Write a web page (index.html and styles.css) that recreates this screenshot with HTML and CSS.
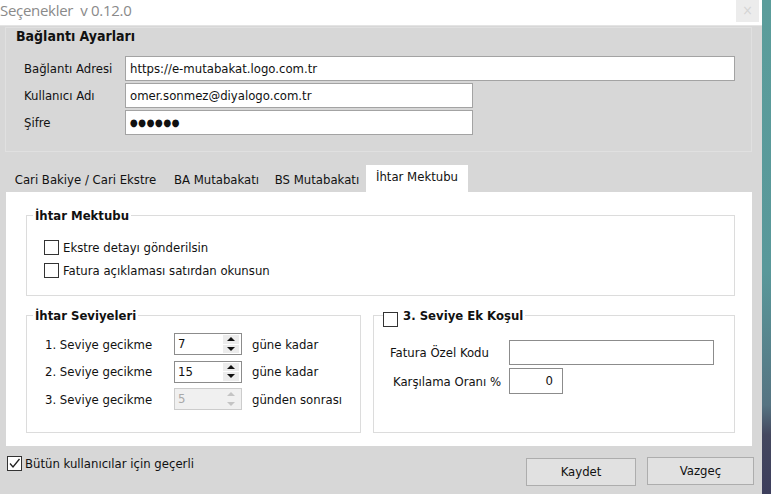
FILE: index.html
```html
<!DOCTYPE html>
<html lang="tr">
<head>
<meta charset="utf-8">
<title>Seçenekler</title>
<link rel="stylesheet" href="styles.css">
</head>
<body>
<div class="screen">
  <div class="window">
    <div class="titlebar">
      <span class="title">Seçenekler&nbsp; v 0.12.0</span>
      <span class="close">×</span>
    </div>
    <div class="body">
      <section class="conn">
        <h2 class="conn-title">Bağlantı Ayarları</h2>
        <div class="conn-rows">
          <div class="conn-row"><span class="conn-label">Bağlantı Adresi</span><div class="field field-wide">https://e-mutabakat.logo.com.tr</div></div>
          <div class="conn-row"><span class="conn-label">Kullanıcı Adı</span><div class="field field-mid">omer.sonmez@diyalogo.com.tr</div></div>
          <div class="conn-row"><span class="conn-label">Şifre</span><div class="field field-mid field-pass">●●●●●●</div></div>
        </div>
      </section>

      <div class="tabs">
        <div class="tab tab-cari">Cari Bakiye / Cari Ekstre</div>
        <div class="tab tab-ba">BA Mutabakatı</div>
        <div class="tab tab-bs">BS Mutabakatı</div>
        <div class="tab tab-ihtar tab-active">İhtar Mektubu</div>
      </div>

      <div class="panel">
        <div class="group group-letter">
          <div class="group-head"><span class="group-title">İhtar Mektubu</span></div>
          <div class="letter-rows">
            <div class="check-row"><span class="cb"></span><span>Ekstre detayı gönderilsin</span></div>
            <div class="check-row"><span class="cb"></span><span>Fatura açıklaması satırdan okunsun</span></div>
          </div>
        </div>

        <div class="group-pair">
          <div class="group group-levels">
            <div class="group-head"><span class="group-title">İhtar Seviyeleri</span></div>
            <div class="level-rows">
              <div class="level-row">
                <span class="level-label">1. Seviye gecikme</span>
                <div class="spin"><span class="spin-value">7</span><span class="spin-btns"><span class="spin-up"></span><span class="spin-down"></span></span></div>
                <span class="level-unit">güne kadar</span>
              </div>
              <div class="level-row">
                <span class="level-label">2. Seviye gecikme</span>
                <div class="spin"><span class="spin-value">15</span><span class="spin-btns"><span class="spin-up"></span><span class="spin-down"></span></span></div>
                <span class="level-unit">güne kadar</span>
              </div>
              <div class="level-row">
                <span class="level-label">3. Seviye gecikme</span>
                <div class="spin spin-disabled"><span class="spin-value">5</span><span class="spin-btns"><span class="spin-up"></span><span class="spin-down"></span></span></div>
                <span class="level-unit">günden sonrası</span>
              </div>
            </div>
          </div>

          <div class="group group-extra">
            <div class="group-head group-head-check"><span class="group-title title-check"><span class="cb"></span><span>3. Seviye Ek Koşul</span></span></div>
            <div class="extra-rows">
              <div class="extra-row"><span class="extra-label">Fatura Özel Kodu</span><div class="field field-code"></div></div>
              <div class="extra-row"><span class="extra-label extra-label-2">Karşılama Oranı %</span><div class="field field-rate">0</div></div>
            </div>
          </div>
        </div>
      </div>

      <div class="footer">
        <div class="check-row check-all">
          <span class="cb cb-checked"><svg width="13" height="13" viewBox="0 0 13 13"><path d="M2 6.5 L5 10 L11.5 2" fill="none" stroke="#222" stroke-width="1.3"/></svg></span>
          <span>Bütün kullanıcılar için geçerli</span>
        </div>
        <div class="buttons">
          <div class="btn btn-save">Kaydet</div>
          <div class="btn btn-cancel">Vazgeç</div>
        </div>
      </div>
    </div>
  </div>
  <div class="edge"></div>
</div>
</body>
</html>
```

FILE: styles.css
```css
* { box-sizing: border-box; }
html, body { margin: 0; padding: 0; }
body {
  width: 771px;
  height: 494px;
  overflow: hidden;
  font-family: "DejaVu Sans Condensed", "DejaVu Sans", sans-serif;
  font-stretch: condensed;
  font-size: 13px;
  color: #111;
  background: #d7d7d7;
}
.screen { display: flex; width: 771px; height: 494px; }
.window { width: 762px; display: flex; flex-direction: column; }
.edge {
  width: 9px;
  background: linear-gradient(to bottom, #5b9d9b 0%, #59989a 55%, #567482 82%, #44485f 88%, #3d3e5c 100%);
}

.titlebar {
  height: 26px;
  background: #fff;
  display: flex;
  justify-content: space-between;
  align-items: flex-start;
  border-bottom: 1px solid #e4e4e4;
}
.title {
  font-family: "Open Sans", sans-serif;
  font-stretch: normal;
  font-size: 15px;
  color: #8a8a8a;
  line-height: 21px;
  letter-spacing: -0.3px;
}
.close {
  width: 23px;
  height: 22px;
  margin-right: 3px;
  background: #ececec;
  color: #d4d4d4;
  text-align: center;
  line-height: 21px;
  font-size: 14px;
}

.body { flex: 1; display: flex; flex-direction: column; background: #d7d7d7; }

.conn {
  margin: 1px 10px 0 5px;
  height: 125px;
  border: 1px solid #e0e0e0;
  padding: 1px 0 0 10px;
}
.conn-title { margin: 0 0 12px; font-size: 14px; font-weight: bold; line-height: 15px; }
.conn-rows { display: flex; flex-direction: column; gap: 2px; margin-left: 8px; }
.conn-row { display: flex; align-items: center; height: 25px; }
.conn-label { width: 101px; }
.field {
  height: 25px;
  border: 1px solid #a3a3a3;
  background: #fff;
  padding: 0 4px;
  line-height: 23px;
  white-space: nowrap;
}
.field-wide { width: 610px; }
.field-mid { width: 348px; }
.field-pass { font-size: 10px; letter-spacing: 0.5px; }

.tabs { display: flex; align-items: flex-end; height: 27px; margin: 13px 0 0 6px; }
.tab { height: 25px; line-height: 25px; text-align: center; white-space: nowrap; }
.tab-cari { width: 159px; }
.tab-ba { width: 103px; }
.tab-bs { width: 98px; }
.tab-ihtar { width: 102px; }
.tab-active { height: 27px; line-height: 24px; background: #fff; }

.panel {
  margin: 0 10px 0 6px;
  height: 254px;
  background: #fff;
  padding: 23px 17px 0 20px;
}
.group { border: 1px solid #dcdcdc; }
.group-head { display: flex; height: 15px; margin: -8px 0 0 6px; }
.group-title {
  background: #fff;
  padding: 0 2px;
  font-weight: bold;
  font-size: 13px;
  line-height: 15px;
  white-space: nowrap;
}
.letter-rows { display: flex; flex-direction: column; gap: 1px; padding: 13px 0 14px 17px; }
.check-row { display: flex; align-items: center; gap: 4px; height: 22px; }
.cb {
  width: 15px;
  height: 15px;
  border: 1px solid #333;
  background: #fff;
  flex: none;
  display: flex;
  align-items: center;
  justify-content: center;
}

.group-pair { display: flex; gap: 12px; margin-top: 19px; }
.group-levels { width: 335px; }
.group-extra { width: 362px; }

.level-rows { display: flex; flex-direction: column; gap: 5.5px; padding: 10px 0 22px 18px; }
.level-row { display: flex; align-items: center; height: 22px; }
.level-label { width: 129px; }
.level-unit { margin-left: 10px; }
.spin {
  width: 68px;
  height: 22px;
  border: 1px solid #8c8c8c;
  background: #fff;
  display: flex;
}
.spin-value { flex: 1; padding-left: 3px; line-height: 20px; }
.spin-btns { width: 19px; display: flex; flex-direction: column; padding: 1px 2px 1px 1px; gap: 1px; }
.spin-up, .spin-down {
  flex: 1;
  background: #ececec;
  display: flex;
  align-items: center;
  justify-content: center;
}
.spin-up::after {
  content: "";
  border-left: 4px solid transparent;
  border-right: 4px solid transparent;
  border-bottom: 4px solid #111;
}
.spin-down::after {
  content: "";
  border-left: 4px solid transparent;
  border-right: 4px solid transparent;
  border-top: 4px solid #111;
}
.spin-disabled { border-color: #cccccc; background: #f0f0f0; color: #a9a9a9; }
.spin-disabled .spin-up, .spin-disabled .spin-down { background: #f0f0f0; }
.spin-disabled .spin-up::after { border-bottom-color: #c4c4c4; }
.spin-disabled .spin-down::after { border-top-color: #c4c4c4; }

.group-head-check { margin-left: 9px; }
.title-check { display: flex; align-items: flex-start; gap: 5px; padding: 0 2px 0 0; }
.title-check .cb { margin: 4px 0 -4px; }
.extra-rows { display: flex; flex-direction: column; gap: 3px; padding: 17px 0 0 16px; }
.extra-row { display: flex; align-items: center; }
.extra-label { width: 119px; }
.extra-label-2 { width: 116px; margin-left: 3px; }
.field-code { width: 205px; height: 25px; border-color: #8c8c8c; }
.field-rate { width: 54px; height: 26px; text-align: right; padding-right: 9px; border-color: #8c8c8c; }

.footer { flex: 1; display: flex; justify-content: space-between; padding: 9px 8px 0 7px; }
.check-all { height: 16px; gap: 3px; }
.buttons { display: flex; gap: 11px; margin-top: 3px; align-items: flex-start; }
.btn {
  height: 28px;
  border: 1px solid #adadad;
  background: #e1e1e1;
  text-align: center;
  line-height: 26px;
}
.btn-save { width: 110px; }
.btn-cancel { width: 107px; margin-top: -1px; }
```
